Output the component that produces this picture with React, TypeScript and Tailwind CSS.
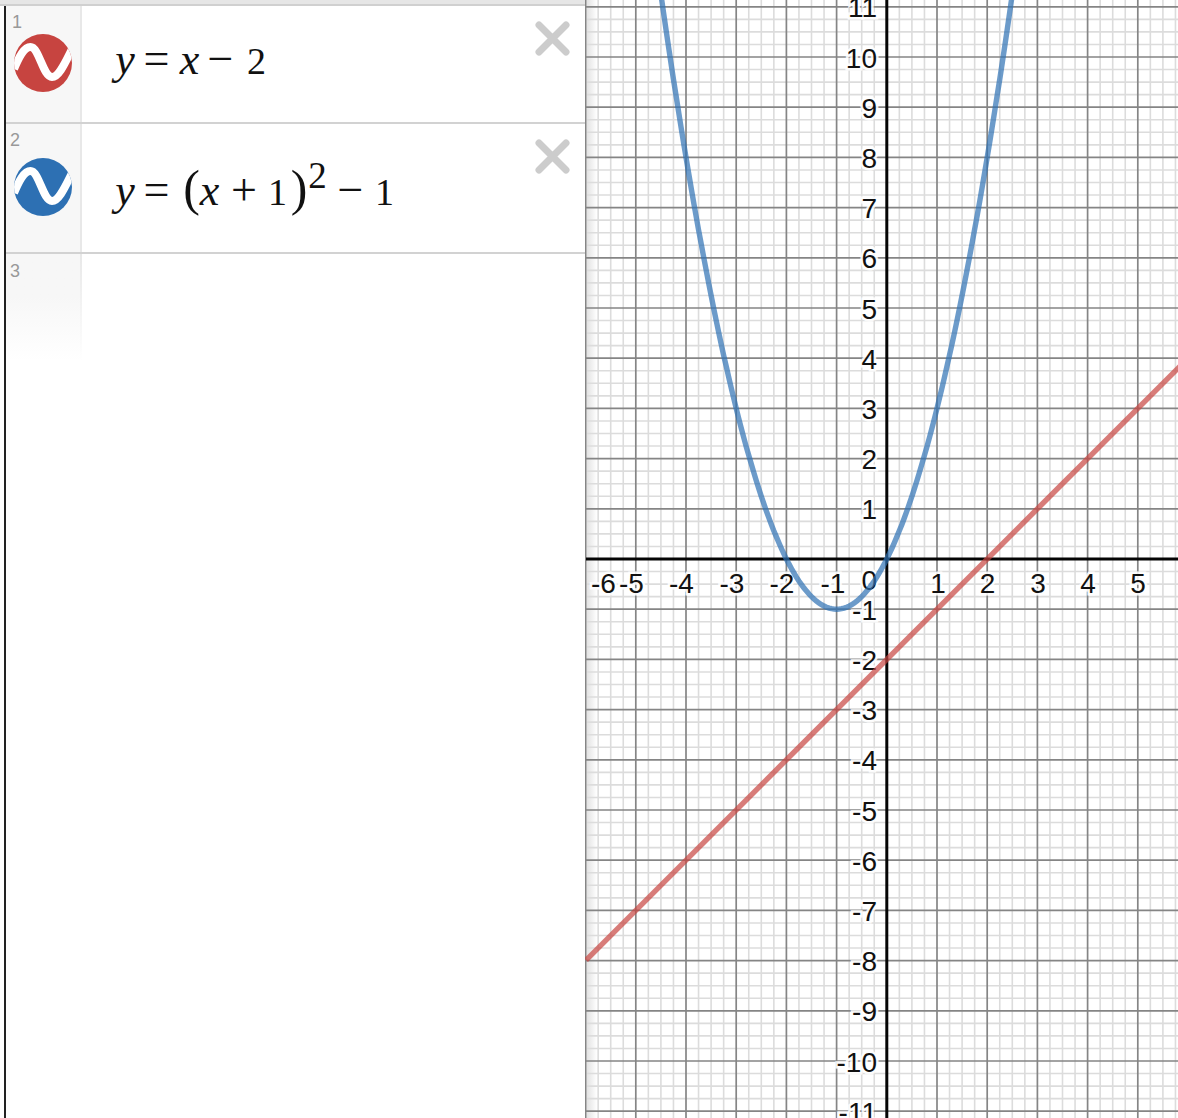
const ORIGIN_X = 886.8;
const ORIGIN_Y = 559;
const UNIT = 50.2;

const px = (v: number) => ORIGIN_X + v * UNIT;
const py = (v: number) => ORIGIN_Y - v * UNIT;

const parabola = Array.from({ length: 156 }, (_, i) => {
  const x = -4.7 + i * 0.05;
  return `${px(x).toFixed(1)},${py((x + 1) ** 2 - 1).toFixed(1)}`;
}).join(" ");

const xLabels = [
  { text: "-6", x: 603.5 },
  { text: "-5", x: 631.5 },
  { text: "-4", x: 681.5 },
  { text: "-3", x: 732 },
  { text: "-2", x: 782 },
  { text: "-1", x: 833 },
  { text: "1", x: 938 },
  { text: "2", x: 987.5 },
  { text: "3", x: 1038 },
  { text: "4", x: 1088 },
  { text: "5", x: 1138 },
];

const yValues = [11, 10, 9, 8, 7, 6, 5, 4, 3, 2, 1, -1, -2, -3, -4, -5, -6, -7, -8, -9, -10, -11];

function Graph() {
  const minorX: number[] = [];
  for (let i = -26; i <= 24; i++) if (i % 4 !== 0) minorX.push(i / 4);
  const minorY: number[] = [];
  for (let i = -46; i <= 46; i++) if (i % 4 !== 0) minorY.push(i / 4);
  const majorX = [-6, -5, -4, -3, -2, -1, 1, 2, 3, 4, 5];

  return (
    <svg viewBox="585 0 593 1118" className="relative block h-full w-full">
      {minorX.map((v) => (
        <line key={v} x1={px(v)} x2={px(v)} y1={0} y2={1118} stroke="#dcdcdc" strokeWidth={1.6} />
      ))}
      {minorY.map((v) => (
        <line key={v} x1={585} x2={1178} y1={py(v)} y2={py(v)} stroke="#dcdcdc" strokeWidth={1.6} />
      ))}
      {majorX.map((v) => (
        <line key={v} x1={px(v)} x2={px(v)} y1={0} y2={1118} stroke="#858585" strokeWidth={1.7} />
      ))}
      {yValues.map((v) => (
        <line key={v} x1={585} x2={1178} y1={py(v)} y2={py(v)} stroke="#858585" strokeWidth={1.7} />
      ))}
      <line x1={586} x2={1178} y1={ORIGIN_Y} y2={ORIGIN_Y} stroke="#050505" strokeWidth={3} />
      <line x1={ORIGIN_X} x2={ORIGIN_X} y1={0} y2={1118} stroke="#050505" strokeWidth={3} />

      <g
        fontFamily="'Liberation Sans', Arial, sans-serif"
        fontSize={28}
        fill="#111"
        stroke="#ffffff"
        strokeWidth={5}
        strokeOpacity={0.9}
        paintOrder="stroke"
      >
        {xLabels.map((l) => (
          <text key={l.text} x={l.x} y={593} textAnchor="middle">
            {l.text}
          </text>
        ))}
        <text x={877} y={590} textAnchor="end">
          0
        </text>
        {yValues.map((v) => (
          <text key={v} x={877} y={py(v) + 10.5} textAnchor="end">
            {v}
          </text>
        ))}
      </g>

      <polyline points={parabola} fill="none" stroke="#2d70b3" strokeOpacity={0.7} strokeWidth={5.4} />
      <line
        x1={586}
        y1={py((586 - ORIGIN_X) / UNIT - 2)}
        x2={px(6)}
        y2={py(4)}
        stroke="#c74440"
        strokeOpacity={0.7}
        strokeWidth={5.4}
      />
    </svg>
  );
}

function WaveIcon({ color }: { color: string }) {
  return (
    <svg width="58" height="58" viewBox="0 0 58 58" className="block">
      <clipPath id={`clip-${color}`}>
        <circle cx="29" cy="29" r="29" />
      </clipPath>
      <circle cx="29" cy="29" r="29" fill={color} />
      <path
        d="M0 35 C5 23 10 13 16.5 13 C25 13 29 43 38 43 C45 43 51 29 58 15"
        fill="none"
        stroke="#fff"
        strokeWidth="8"
        clipPath={`url(#clip-${color})`}
      />
    </svg>
  );
}

function CloseIcon() {
  return (
    <svg width="35" height="35" viewBox="0 0 35 35" className="block">
      <path d="M4 4 L31 31 M31 4 L4 31" stroke="#cccccc" strokeWidth="7" strokeLinecap="round" />
    </svg>
  );
}

function Cell({ w, children, className = "" }: { w: string; children: string; className?: string }) {
  return <span className={`flex justify-center ${w} ${className}`}>{children}</span>;
}

const ROW_NUMBER = "text-[18px] leading-none text-[#999999] font-['Liberation_Sans',Arial,sans-serif]";
const LETTER = "italic text-[44px]";
const DIGIT = "text-[38px]";
const OP = "text-[46px]";

export default function App() {
  return (
    <div className="flex h-[1118px] w-[1178px] overflow-hidden bg-white">
      <div className="flex w-[585px] shrink-0 flex-col">
        <div className="h-[6px] border-b-2 border-[#d0d0d0] bg-[#e6e6e6]" />
        <div className="ml-[4px] flex flex-1 flex-col border-l-[2px] border-[#222222]">
          <div className="flex h-[118px] border-b-2 border-[#d2d2d2]">
            <div className="w-[76px] shrink-0 border-r-2 border-[#e8e8e8] bg-[#f7f7f7] pl-[6px] pt-[7px]">
              <div className={ROW_NUMBER}>1</div>
              <div className="ml-[2px] mt-[3px]">
                <WaveIcon color="#c74440" />
              </div>
            </div>
            <div className="flex flex-1 items-baseline pl-[28px] pt-[30px] font-['Liberation_Serif',serif] leading-none text-[#111]">
              <Cell w="w-[30px]" className={LETTER}>y</Cell>
              <Cell w="w-[33px]" className={OP}>=</Cell>
              <Cell w="w-[33px]" className={LETTER}>x</Cell>
              <Cell w="w-[29px]" className={OP}>−</Cell>
              <Cell w="w-[43px]" className={DIGIT}>2</Cell>
            </div>
            <div className="pr-[15px] pt-[15px]">
              <CloseIcon />
            </div>
          </div>

          <div className="flex h-[130px] border-b-2 border-[#d2d2d2]">
            <div className="w-[76px] shrink-0 border-r-2 border-[#e8e8e8] bg-[#f7f7f7] pl-[4px] pt-[7px]">
              <div className={ROW_NUMBER}>2</div>
              <div className="ml-[4px] mt-[9px]">
                <WaveIcon color="#2d70b3" />
              </div>
            </div>
            <div className="flex flex-1 items-baseline pl-[28px] pt-[39px] font-['Liberation_Serif',serif] leading-none text-[#111]">
              <Cell w="w-[30px]" className={LETTER}>y</Cell>
              <Cell w="w-[33px]" className={OP}>=</Cell>
              <Cell w="w-[23px]" className="ml-[7px] text-[50px] font-light">(</Cell>
              <Cell w="w-[13px]" className={LETTER}>x</Cell>
              <Cell w="w-[56px]" className={OP}>+</Cell>
              <Cell w="w-[11px]" className={DIGIT}>1</Cell>
              <Cell w="w-[32px]" className="text-[50px] font-light">)</Cell>
              <Cell w="w-[5px]" className="relative top-[-17px] text-[37px]">2</Cell>
              <Cell w="w-[61px]" className={OP}>−</Cell>
              <Cell w="w-[7px]" className={DIGIT}>1</Cell>
            </div>
            <div className="pr-[15px] pt-[15px]">
              <CloseIcon />
            </div>
          </div>

          <div className="h-[107px] w-[76px] bg-linear-to-b from-[#e8e8e8] to-white pr-[2px]">
            <div className="h-full bg-linear-to-b from-[#f7f7f7] from-40% to-white pl-[4px] pt-[8px]">
              <div className={ROW_NUMBER}>3</div>
            </div>
          </div>
        </div>
      </div>

      <div className="relative h-full flex-1">
        <div className="absolute inset-y-0 left-0 w-[12px] bg-linear-to-r from-[#dddddd] to-transparent" />
        <Graph />
      </div>
    </div>
  );
}
